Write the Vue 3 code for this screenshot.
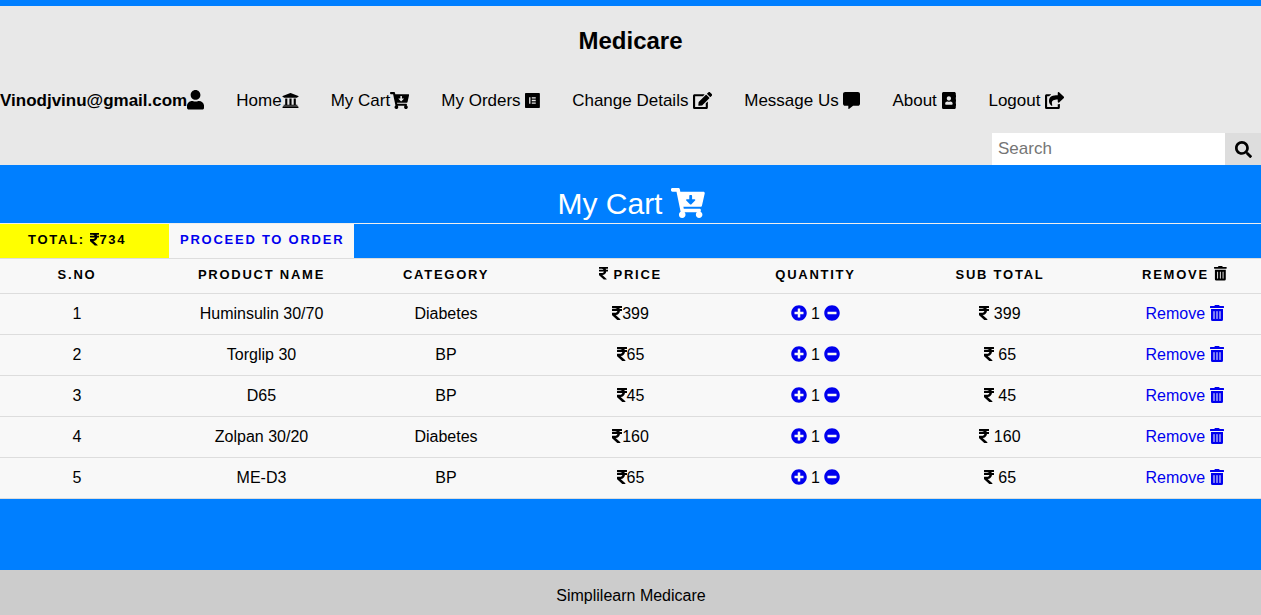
<template>
  <div class="page">
    <header class="top">
      <h1 class="brand">Medicare</h1>
      <nav class="nav">
        <a v-for="link in links" :key="link.label" class="nav-link" :class="{ user: link.bold }">
          {{ link.label }}<svg class="ico nav-ico" :class="{ spaced: link.spaced }" :viewBox="icons[link.icon].box"><path :d="icons[link.icon].d" /></svg>
        </a>
      </nav>
      <form class="search" @submit.prevent>
        <input type="text" placeholder="Search" />
        <button type="submit" aria-label="Search">
          <svg class="ico search-ico" :viewBox="icons.search.box"><path :d="icons.search.d" /></svg>
        </button>
      </form>
    </header>

    <main class="cart">
      <h2 class="cart-title">
        My Cart
        <svg class="ico title-ico" :viewBox="icons.cart.box"><path :d="icons.cart.d" /></svg>
      </h2>
      <hr class="rule" />
      <div class="actions">
        <span class="total">
          Total: <svg class="ico small-ico" :viewBox="icons.rupee.box"><path :d="icons.rupee.d" /></svg>734
        </span>
        <a class="proceed">Proceed to order</a>
      </div>

      <table class="items">
        <thead>
          <tr>
            <th>S.No</th>
            <th>Product Name</th>
            <th>Category</th>
            <th><svg class="ico small-ico" :viewBox="icons.rupee.box"><path :d="icons.rupee.d" /></svg> Price</th>
            <th>Quantity</th>
            <th>Sub Total</th>
            <th>Remove <svg class="ico small-ico" :viewBox="icons.trash.box"><path :d="icons.trash.d" /></svg></th>
          </tr>
        </thead>
        <tbody>
          <tr v-for="(item, i) in items" :key="item.name">
            <td>{{ i + 1 }}</td>
            <td>{{ item.name }}</td>
            <td>{{ item.category }}</td>
            <td><svg class="ico" :viewBox="icons.rupee.box"><path :d="icons.rupee.d" /></svg>{{ item.price }}</td>
            <td class="qty">
              <svg class="ico" :viewBox="icons.plus.box"><path :d="icons.plus.d" /></svg>
              1
              <svg class="ico" :viewBox="icons.minus.box"><path :d="icons.minus.d" /></svg>
            </td>
            <td><svg class="ico" :viewBox="icons.rupee.box"><path :d="icons.rupee.d" /></svg> {{ item.price }}</td>
            <td class="remove">
              Remove <svg class="ico" :viewBox="icons.trash.box"><path :d="icons.trash.d" /></svg>
            </td>
          </tr>
        </tbody>
      </table>
    </main>

    <footer class="foot">Simplilearn Medicare</footer>
  </div>
</template>

<script setup>
// Font Awesome 5 shapes
const icons = {
  user: { box: '0 0 448 512', d: 'M224 256c70.7 0 128-57.3 128-128S294.7 0 224 0 96 57.3 96 128s57.3 128 128 128zm89.6 32h-16.7c-22.2 10.2-46.9 16-72.9 16s-50.6-5.8-72.9-16h-16.7C60.2 288 0 348.2 0 422.4V464c0 26.5 21.5 48 48 48h352c26.5 0 48-21.5 48-48v-41.6c0-74.2-60.2-134.4-134.4-134.4z' },
  bank: { box: '0 0 512 512', d: 'M496 128v16a8 8 0 0 1-8 8h-24v12c0 6.627-5.373 12-12 12H60c-6.627 0-12-5.373-12-12v-12H24a8 8 0 0 1-8-8v-16a8 8 0 0 1 4.941-7.392l232-88a7.996 7.996 0 0 1 6.118 0l232 88A8 8 0 0 1 496 128zm-24 304H40c-13.255 0-24 10.745-24 24v16a8 8 0 0 0 8 8h464a8 8 0 0 0 8-8v-16c0-13.255-10.745-24-24-24zM96 192v192H60c-6.627 0-12 5.373-12 12v20h416v-20c0-6.627-5.373-12-12-12h-36V192h-64v192h-64V192h-64v192h-64V192H96z' },
  cart: { box: '0 0 576 512', d: 'M504.717 320H211.572l6.545 32h268.418c15.401 0 26.816 14.301 23.403 29.319l-5.517 24.276C523.112 414.668 536 433.828 536 456c0 31.202-25.519 56.444-56.824 55.994-29.823-.429-54.35-24.631-55.155-54.447-.44-16.287 6.085-31.049 16.803-41.548H231.176C241.553 426.165 248 440.326 248 456c0 31.813-26.528 57.431-58.67 55.938-28.54-1.325-51.751-24.385-53.251-52.917-1.158-22.034 10.436-41.455 28.051-51.586L93.883 64H24C10.745 64 0 53.255 0 40V24C0 10.745 10.745 0 24 0h102.529c11.401 0 21.228 8.021 23.513 19.19L159.208 64H551.99c15.401 0 26.816 14.301 23.403 29.319l-47.273 208C525.637 312.246 515.923 320 504.717 320zM403.029 192H360v-60c0-6.627-5.373-12-12-12h-24c-6.627 0-12 5.373-12 12v60h-43.029c-10.691 0-16.045 12.926-8.485 20.485l67.029 67.029c4.686 4.686 12.284 4.686 16.971 0l67.029-67.029c7.559-7.559 2.205-20.485-8.486-20.485z' },
  orders: { box: '0 0 448 512', d: 'M425.6 32H22.4C10 32 0 42 0 54.4v403.2C0 470 10 480 22.4 480h403.2c12.4 0 22.4-10 22.4-22.4V54.4C448 42 438 32 425.6 32M164.3 355.5h-39.8v-199h39.8v199zm159.3 0H204.1v-39.8h119.5v39.8zm0-79.6H204.1v-39.8h119.5v39.8zm0-79.7H204.1v-39.8h119.5v39.8z' },
  edit: { box: '0 0 576 512', d: 'M402.6 83.2l90.2 90.2c3.8 3.8 3.8 10 0 13.8L274.4 405.6l-92.8 10.3c-12.4 1.4-22.9-9.1-21.5-21.5l10.3-92.8L388.8 83.2c3.8-3.8 10-3.8 13.8 0zm162-22.9l-48.8-48.8c-15.2-15.2-39.9-15.2-55.2 0l-35.4 35.4c-3.8 3.8-3.8 10 0 13.8l90.2 90.2c3.8 3.8 10 3.8 13.8 0l35.4-35.4c15.2-15.3 15.2-40 0-55.2zM384 346.2V448H64V128h229.8c3.2 0 6.2-1.3 8.5-3.5l40-40c7.6-7.6 2.2-20.5-8.5-20.5H48C21.5 64 0 85.5 0 112v352c0 26.5 21.5 48 48 48h352c26.5 0 48-21.5 48-48V306.2c0-10.7-12.9-16-20.5-8.5l-40 40c-2.2 2.3-3.5 5.3-3.5 8.5z' },
  message: { box: '0 0 512 512', d: 'M448 0H64C28.7 0 0 28.7 0 64v288c0 35.3 28.7 64 64 64h96v84c0 9.8 11.2 15.5 19.1 9.7L304 416h144c35.3 0 64-28.7 64-64V64c0-35.3-28.7-64-64-64z' },
  about: { box: '0 0 448 512', d: 'M436 160c6.6 0 12-5.4 12-12v-40c0-6.6-5.4-12-12-12h-20V48c0-26.5-21.5-48-48-48H48C21.5 0 0 21.5 0 48v416c0 26.5 21.5 48 48 48h320c26.5 0 48-21.5 48-48v-48h20c6.6 0 12-5.4 12-12v-40c0-6.6-5.4-12-12-12h-20v-64h20c6.6 0 12-5.4 12-12v-40c0-6.6-5.4-12-12-12h-20v-64h20zm-228-32c35.3 0 64 28.7 64 64s-28.7 64-64 64-64-28.7-64-64 28.7-64 64-64zm112 236.8c0 10.6-10 19.2-22.4 19.2H118.4C106 384 96 375.4 96 364.8v-19.2c0-31.8 30.1-57.6 67.2-57.6h5c12.3 5.1 25.7 8 39.8 8s27.6-2.9 39.8-8h5c37.1 0 67.2 25.8 67.2 57.6v19.2z' },
  logout: { box: '0 0 576 512', d: 'M568.482 177.448L424.479 313.433C409.3 327.768 384 317.14 384 295.985v-71.963c-144.575.97-205.566 35.113-164.775 171.353 4.483 14.973-12.846 26.567-25.006 17.33C155.252 383.105 120 326.488 120 269.339c0-143.937 117.599-172.5 264-173.312V24.012c0-21.174 25.317-31.768 40.479-17.448l144.003 135.988c10.02 9.463 10.028 25.425 0 34.896zM384 379.128V448H64V128h50.916a11.99 11.99 0 0 0 8.648-3.693c14.953-15.568 32.237-27.89 51.014-37.676C185.708 80.83 181.584 64 169.033 64H48C21.49 64 0 85.49 0 112v352c0 26.51 21.49 48 48 48h352c26.51 0 48-21.49 48-48v-88.806c0-8.288-8.197-14.082-16.011-11.318a71.83 71.83 0 0 1-34.189 3.377c-7.27-1.046-13.8 4.514-13.8 11.875z' },
  search: { box: '0 0 512 512', d: 'M505 442.7L405.3 343c-4.5-4.5-10.6-7-17-7H372c27.6-35.3 44-79.7 44-128C416 93.1 322.9 0 208 0S0 93.1 0 208s93.1 208 208 208c48.3 0 92.7-16.4 128-44v16.3c0 6.4 2.5 12.5 7 17l99.7 99.7c9.4 9.4 24.6 9.4 33.9 0l28.3-28.3c9.4-9.4 9.4-24.6.1-34zM208 336c-70.7 0-128-57.2-128-128 0-70.7 57.2-128 128-128 70.7 0 128 57.2 128 128 0 70.7-57.2 128-128 128z' },
  rupee: { box: '0 0 320 512', d: 'M308 96c6.627 0 12-5.373 12-12V44c0-6.627-5.373-12-12-12H12C5.373 32 0 37.373 0 44v44.748c0 6.627 5.373 12 12 12h85.28c27.308 0 48.261 9.958 60.97 27.252H12c-6.627 0-12 5.373-12 12v40c0 6.627 5.373 12 12 12h158.757c-6.217 36.086-32.961 58.632-74.757 58.632H12c-6.627 0-12 5.373-12 12v53.012c0 3.349 1.4 6.546 3.861 8.818l165.052 152.356a12.001 12.001 0 0 0 8.139 3.182h82.562c10.924 0 16.166-13.408 8.139-20.818L116.871 319.906c76.499-2.34 131.144-53.395 138.318-127.906H308c6.627 0 12-5.373 12-12v-40c0-6.627-5.373-12-12-12h-58.69c-3.486-11.541-8.28-22.246-14.252-32H308z' },
  plus: { box: '0 0 512 512', d: 'M256 8C119 8 8 119 8 256s111 248 248 248 248-111 248-248S393 8 256 8zm144 276c0 6.6-5.4 12-12 12h-92v92c0 6.6-5.4 12-12 12h-56c-6.6 0-12-5.4-12-12v-92h-92c-6.6 0-12-5.4-12-12v-56c0-6.6 5.4-12 12-12h92v-92c0-6.6 5.4-12 12-12h56c6.6 0 12 5.4 12 12v92h92c6.6 0 12 5.4 12 12v56z' },
  minus: { box: '0 0 512 512', d: 'M256 8C119 8 8 119 8 256s111 248 248 248 248-111 248-248S393 8 256 8zM124 296c-6.6 0-12-5.4-12-12v-56c0-6.6 5.4-12 12-12h264c6.6 0 12 5.4 12 12v56c0 6.6-5.4 12-12 12H124z' },
  trash: { box: '0 0 448 512', d: 'M32 464a48 48 0 0 0 48 48h288a48 48 0 0 0 48-48V128H32zm272-256a16 16 0 0 1 32 0v224a16 16 0 0 1-32 0zm-96 0a16 16 0 0 1 32 0v224a16 16 0 0 1-32 0zm-96 0a16 16 0 0 1 32 0v224a16 16 0 0 1-32 0zM432 32H312l-9.4-18.7A24 24 0 0 0 281.1 0H166.8a23.72 23.72 0 0 0-21.4 13.3L136 32H16A16 16 0 0 0 0 48v32a16 16 0 0 0 16 16h416a16 16 0 0 0 16-16V48a16 16 0 0 0-16-16z' }
}

const links = [
  { label: 'Vinodjvinu@gmail.com', icon: 'user', bold: true },
  { label: 'Home', icon: 'bank' },
  { label: 'My Cart', icon: 'cart' },
  { label: 'My Orders', icon: 'orders', spaced: true },
  { label: 'Change Details', icon: 'edit', spaced: true },
  { label: 'Message Us', icon: 'message', spaced: true },
  { label: 'About', icon: 'about', spaced: true },
  { label: 'Logout', icon: 'logout', spaced: true }
]

const items = [
  { name: 'Huminsulin 30/70', category: 'Diabetes', price: 399 },
  { name: 'Torglip 30', category: 'BP', price: 65 },
  { name: 'D65', category: 'BP', price: 45 },
  { name: 'Zolpan 30/20', category: 'Diabetes', price: 160 },
  { name: 'ME-D3', category: 'BP', price: 65 }
]
</script>

<style>
html,
body {
  margin: 0;
  background: #fff;
}
</style>

<style scoped>
.page {
  font-family: "Liberation Sans", Arial, sans-serif;
  font-size: 16px;
  color: #000;
  min-height: 615px;
  display: flex;
  flex-direction: column;
}

.ico {
  height: 16px;
  vertical-align: -2px;
  display: inline-block;
  fill: currentColor;
}

.small-ico {
  height: 14.5px;
  vertical-align: -2px;
}

/* header */
.top {
  background: #e8e8e8;
  border-top: 6px solid #007fff;
}

.brand {
  margin: 0;
  padding-top: 21px;
  font-size: 24px;
  line-height: 28px;
  font-weight: 700;
  text-align: center;
}

.nav {
  display: flex;
  align-items: center;
  margin-top: 25px;
  height: 42px;
  font-size: 17px;
}

.nav-link {
  padding: 0 16px;
  white-space: nowrap;
  display: flex;
  align-items: center;
}

.nav-link.user {
  padding-left: 0;
  font-weight: 700;
}

.nav-ico {
  height: 17px;
  margin-bottom: 2px;
}

.user .nav-ico {
  height: 19.5px;
}

.nav-ico.spaced {
  margin-left: 4.7px;
}

.search {
  display: flex;
  justify-content: flex-end;
  margin-top: 11px;
  height: 32px;
}

.search input {
  width: 233px;
  height: 32px;
  box-sizing: border-box;
  padding: 0 6px;
  border: none;
  outline: none;
  font: inherit;
  font-size: 17px;
  background: #fff;
  color: #000;
}

.search button {
  width: 36px;
  height: 32px;
  padding: 0;
  border: none;
  background: #ddd;
  display: flex;
  align-items: center;
  justify-content: center;
}

.search-ico {
  height: 17px;
}

/* cart */
.cart {
  flex: 1;
  background: #007fff;
}

.cart-title {
  margin: 0;
  padding: 21px 0 1px 1px;
  font-size: 30px;
  line-height: 36px;
  font-weight: 400;
  color: #fff;
  text-align: center;
}

.title-ico {
  height: 30px;
  fill: #fff;
  vertical-align: -4px;
}

.rule {
  margin: 0;
  border: none;
  border-top: 1px solid #eee;
}

.actions {
  display: flex;
  height: 34px;
  font-size: 13px;
  font-weight: 700;
  letter-spacing: 1.75px;
  line-height: 32px;
  text-transform: uppercase;
}

.total {
  width: 141px;
  padding-left: 28px;
  background: #ff0;
}

.proceed {
  width: 174px;
  padding-left: 11px;
  background: #f8f8f8;
  color: #00e;
}

.items {
  width: 100%;
  border-collapse: collapse;
  table-layout: fixed;
  background: #f8f8f8;
}

.items th:nth-child(odd) {
  width: 154px;
}

.items th {
  height: 35px;
  padding: 0 0 4px;
  box-sizing: border-box;
  font-size: 13px;
  letter-spacing: 1.75px;
  text-transform: uppercase;
  border-top: 1px solid #ddd;
  border-bottom: 1px solid #ddd;
}

.items td {
  height: 41px;
  padding: 0;
  box-sizing: border-box;
  text-align: center;
  border-bottom: 1px solid #ddd;
}

.items th:nth-child(n+5),
.items td:nth-child(n+5) {
  padding-left: 1px;
}

.qty .ico,
.remove {
  color: #00e;
}

.foot {
  height: 45px;
  box-sizing: border-box;
  padding: 6px 0 0 1px;
  background: #ccc;
  display: flex;
  align-items: center;
  justify-content: center;
}
</style>
